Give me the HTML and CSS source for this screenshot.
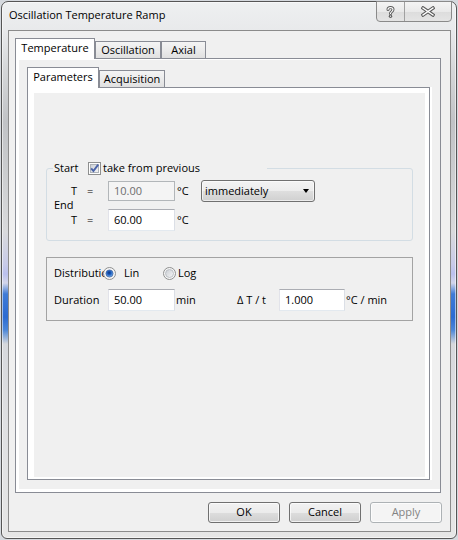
FILE: index.html
```html
<!DOCTYPE html>
<html>
<head>
<meta charset="utf-8">
<link rel="stylesheet" href="styles.css">
</head>
<body>
<div class="window">
  <div class="titlebar">
    <span class="title">Oscillation Temperature Ramp</span>
    <div class="caption-btns">
      <span class="cap help">
        <svg width="9" height="12" viewBox="0 0 9 12">
          <path d="M2 3.6 C2 0.9 7 0.9 7 3.6 C7 5.7 4.5 5.5 4.5 7.6" fill="none" stroke="#5c5c5c" stroke-width="3" stroke-linecap="round"/>
          <circle cx="4.5" cy="10.2" r="1.7" fill="#5c5c5c"/>
          <path d="M2 3.6 C2 0.9 7 0.9 7 3.6 C7 5.7 4.5 5.5 4.5 7.6" fill="none" stroke="#fff" stroke-width="1.1" stroke-linecap="round"/>
          <circle cx="4.5" cy="10.2" r="0.6" fill="#fff"/>
        </svg>
      </span>
      <span class="cap close">
        <svg width="14" height="11" viewBox="0 0 14 11">
          <path d="M2 2 L12 9 M12 2 L2 9" fill="none" stroke="#5c5c5c" stroke-width="3.4" stroke-linecap="square"/>
          <path d="M2 2 L12 9 M12 2 L2 9" fill="none" stroke="#fff" stroke-width="1.3" stroke-linecap="square"/>
        </svg>
      </span>
    </div>
  </div>
  <div class="client">
    <div class="tabctl outer">
      <div class="tabstrip">
        <div class="tab active w-temp">Temperature</div>
        <div class="tab w-osc">Oscillation</div>
        <div class="tab w-axial">Axial</div>
      </div>
      <div class="outer-panel">
        <div class="outer-page">
          <div class="tabctl inner">
            <div class="tabstrip">
              <div class="tab active w-params">Parameters</div>
              <div class="tab w-acq">Acquisition</div>
            </div>
            <div class="inner-panel">
              <div class="inner-page">
                <fieldset class="grp-start">
                  <legend class="lg">
                    <span class="lg-start">Start</span><span class="chk"><svg width="13" height="13" viewBox="0 0 13 13">
                      <defs>
                        <linearGradient id="cg" x1="0" y1="0" x2="1" y2="1">
                          <stop offset="0" stop-color="#cbcfd5"/>
                          <stop offset="1" stop-color="#f6f6f6"/>
                        </linearGradient>
                      </defs>
                      <rect x="0.5" y="0.5" width="12" height="12" fill="#fdfdfd" stroke="#8e8f8f"/>
                      <rect x="2.5" y="2.5" width="8" height="8" fill="url(#cg)" stroke="#aeb3b9"/>
                      <path d="M3.2 6.4 L5.4 9 L10.2 2.6" fill="none" stroke="#4a63a8" stroke-width="1.9"/>
                    </svg></span><span class="lg-text">take from previous</span>
                  </legend>
                  <div class="row r1">
                    <span class="teq"><span class="t">T</span>=</span>
                    <span class="tb dis">10.00</span>
                    <span class="unit">°C</span>
                    <span class="combo"><span>immediately</span><span class="arrow"></span></span>
                  </div>
                  <div class="endlbl">End</div>
                  <div class="row r2">
                    <span class="teq"><span class="t">T</span>=</span>
                    <span class="tb">60.00</span>
                    <span class="unit">°C</span>
                  </div>
                </fieldset>
                <div class="grp-dist">
                  <div class="row d1">
                    <span class="dlbl">Distributio</span>
                    <span class="radio"><svg width="13" height="13" viewBox="0 0 13 13">
                      <defs>
                        <radialGradient id="rb" cx="0.45" cy="0.4" r="0.6">
                          <stop offset="0" stop-color="#0b2f7a"/>
                          <stop offset="0.45" stop-color="#1d5fc0"/>
                          <stop offset="1" stop-color="#7fb6ee"/>
                        </radialGradient>
                        <linearGradient id="rg" x1="0" y1="0" x2="1" y2="1">
                          <stop offset="0" stop-color="#c9cdd3"/>
                          <stop offset="1" stop-color="#f7f7f7"/>
                        </linearGradient>
                      </defs>
                      <circle cx="6.5" cy="6.5" r="6" fill="#f6f6f6" stroke="#8e8f8f"/>
                      <circle cx="6.5" cy="6.5" r="3.6" fill="url(#rb)" stroke="#2d4f8c" stroke-width="0.6"/>
                    </svg></span>
                    <span class="rlbl lin">Lin</span>
                    <span class="radio"><svg width="13" height="13" viewBox="0 0 13 13">
                      <circle cx="6.5" cy="6.5" r="6" fill="#f6f6f6" stroke="#8e8f8f"/>
                      <circle cx="6.5" cy="6.5" r="4" fill="url(#rg)" stroke="#b3b7bd" stroke-width="0.8"/>
                    </svg></span>
                    <span class="rlbl log">Log</span>
                  </div>
                  <div class="row d2">
                    <span class="durlbl">Duration</span>
                    <span class="tb">50.00</span>
                    <span class="minlbl">min</span>
                    <span class="dtlbl">Δ T / t</span>
                    <span class="tb w66">1.000</span>
                    <span class="rate">°C / min</span>
                  </div>
                </div>
              </div>
            </div>
          </div>
        </div>
      </div>
    </div>
    <div class="buttons">
      <span class="btn">OK</span>
      <span class="btn">Cancel</span>
      <span class="btn disabled">Apply</span>
    </div>
  </div>
</div>
</body>
</html>
```
FILE: styles.css
```css
* { box-sizing: border-box; }
html, body { margin: 0; padding: 0; }
body {
  width: 458px;
  height: 540px;
  overflow: hidden;
  background: #d5d9de;
  font: 11px/16px "Open Sans", "Noto Sans", sans-serif;
  color: #000;
}

.window {
  margin: 1px 0 0 1px;
  width: 456px;
  height: 538px;
  border: 1px solid #555;
  border-radius: 7px 7px 6px 6px;
  box-shadow: inset 0 0 0 1px rgba(255,255,255,0.55);
  background: linear-gradient(to bottom,
    #eef0f1 0px, #e8e9eb 30px, #d4d6d8 70px, #c1c3c6 120px, #cbcdcf 170px,
    #d9dadc 230px, #c8cbe8 262px, #bac0ee 272px, #d3d6ea 281px,
    #3f7bd6 292px, #2c6bd2 315px, #4c87d8 328px, #d6d8dc 342px,
    #dfe0e2 420px, #e6e6e6 100%);
  display: flex;
  flex-direction: column;
}

.titlebar {
  flex: none;
  height: 28px;
  display: flex;
  justify-content: space-between;
  align-items: flex-start;
  padding: 0 4px 0 7px;
}
.title {
  margin-top: 5px;
  line-height: 16px;
  color: #000;
}
.caption-btns {
  margin-top: -1px;
  height: 21px;
  display: flex;
  border: 1px solid #8a8a8a;
  border-radius: 0 0 4px 4px;
  background: linear-gradient(to bottom, #f4f4f4 0%, #e9e9e9 50%, #dcdcdc 51%, #e4e4e4 100%);
  overflow: hidden;
}
.cap {
  display: flex;
  align-items: center;
  justify-content: center;
  height: 100%;
}
.cap.help { width: 27px; }
.cap.close { width: 47px; border-left: 1px solid #a0a0a0; }

.client {
  flex: 1;
  margin: 0 5px 6px 6px;
  border: 1px solid #8b8b8b;
  background: #f0f0f0;
  padding: 7px 8px 8px 6px;
  display: flex;
  flex-direction: column;
}

/* tab controls */
.tabctl.outer { width: 426px; }
.tabctl.inner { width: 403px; }
.tabstrip {
  height: 20px;
  display: flex;
  align-items: flex-end;
}
.tab {
  height: 17px;
  border: 1px solid #898c95;
  border-bottom: none;
  background: linear-gradient(to bottom, #f4f4f4 0%, #ebebeb 50%, #e0e0e0 100%);
  text-align: center;
  line-height: 15px;
  white-space: nowrap;
}
.tab.active {
  height: 21px;
  margin-bottom: -1px;
  position: relative;
  z-index: 1;
  background: #fff;
  line-height: 18px;
}
.w-temp { width: 80px; }
.w-osc { width: 66px; }
.w-axial { width: 45px; }
.w-params { width: 72px; }
.w-acq { width: 66px; }

.outer-panel {
  height: 435px;
  border: 1px solid #898c95;
  background: #fff;
  padding: 1px 0 3px 3px;
}
.outer-page {
  height: 429px;
  background: #f0f0f0;
  padding: 7px 0 0 8px;
}
.inner-panel {
  height: 393px;
  border: 1px solid #898c95;
  background: #fff;
  padding: 5px 4px 2px 6px;
  box-shadow: 2px 0 0 #fff;
}
.inner-page {
  height: 384px;
  background: #f0f0f0;
  overflow: hidden;
  padding-top: 1px;
}

/* group: start / end */
.grp-start {
  margin: 66px 12px 0;
  padding: 0 0 9px 0;
  border: 1px solid #d3dde4;
  border-radius: 3px;
  min-width: 0;
}
.lg {
  margin-left: 6px;
  padding: 0 1px;
  width: 214px;
  line-height: 16px;
  height: 16px;
  white-space: nowrap;
}
.lg-start { display: inline-block; width: 34px; vertical-align: top; }
.chk { display: inline-block; width: 13px; height: 13px; vertical-align: top; margin-top: 2px; }
.chk svg, .radio svg { display: block; }
.lg-text { display: inline-block; margin-left: 2px; vertical-align: top; }

.row { display: flex; align-items: center; white-space: nowrap; }
.r1 { margin-top: 4px; height: 22px; padding-left: 24px; }
.r2 { height: 22px; padding-left: 24px; }
.teq { width: 37px; }
.t { display: inline-block; width: 16px; }
.endlbl { margin: -4px 0 -3px 7px; line-height: 14px; height: 14px; }

.tb {
  width: 67px;
  height: 22px;
  border: 1px solid;
  border-color: #abadb3 #dbdfe6 #e3e9ef #e2e3ea;
  background: #fff;
  padding: 2px 0 0 5px;
  line-height: 16px;
}
.tb.dis {
  height: 20px;
  background: #f4f4f4;
  border-color: #b2b6b9;
  color: #6d6d6d;
  padding-top: 1px;
}
.tb.w66 { width: 66px; }
.unit { margin-left: 2px; width: 24px; }

.combo {
  width: 114px;
  height: 22px;
  border: 1px solid #707070;
  border-radius: 3px;
  background: linear-gradient(to bottom, #f3f3f3 0%, #ececec 50%, #dedede 51%, #d0d0d0 100%);
  box-shadow: inset 0 0 0 1px rgba(255,255,255,0.6);
  display: flex;
  align-items: center;
  justify-content: space-between;
  padding: 0 5px 1px 3px;
}
.arrow {
  width: 0;
  height: 0;
  border-left: 3.5px solid transparent;
  border-right: 3.5px solid transparent;
  border-top: 4px solid #000;
  margin-top: 1px;
}

/* distribution panel */
.grp-dist {
  margin: 16px 12px 0;
  height: 64px;
  border: 1px solid #a3a3a3;
  padding: 7px 0 0 7px;
}
.d1 { height: 16px; }
.dlbl { width: 49px; flex: none; }
.radio { width: 13px; height: 13px; flex: none; position: relative; }
.rlbl.lin { margin-left: 8px; width: 39px; }
.rlbl.log { margin-left: 2px; }
.d2 { margin-top: 8px; height: 22px; }
.durlbl { width: 54px; }
.minlbl { margin-left: 1px; width: 61px; }
.dtlbl { width: 42px; }
.rate { margin-left: 1px; }

/* dialog buttons */
.buttons {
  margin-top: 9px;
  display: flex;
  justify-content: flex-end;
  gap: 9px;
}
.btn {
  width: 72px;
  height: 21px;
  border: 1px solid #707070;
  border-radius: 3px;
  background: linear-gradient(to bottom, #f2f2f2 0%, #ebebeb 50%, #dddddd 51%, #cfcfcf 100%);
  box-shadow: inset 0 0 0 1px rgba(255,255,255,0.7);
  text-align: center;
  line-height: 18px;
}
.btn.disabled {
  border-color: #adb2b5;
  background: #f4f4f4;
  color: #838383;
}
```
